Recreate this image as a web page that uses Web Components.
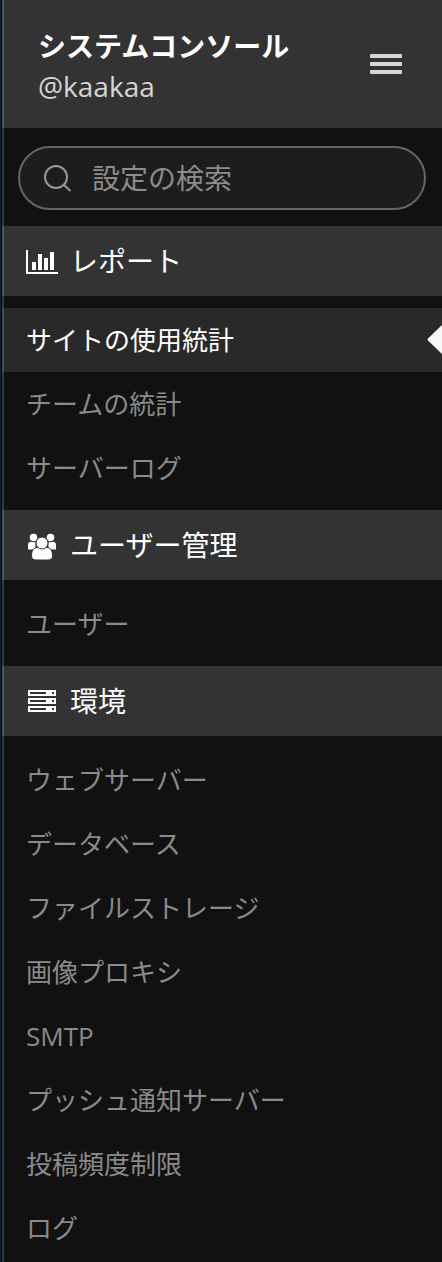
<!DOCTYPE html>
<html lang="ja">
<head>
<meta charset="utf-8">
<meta name="viewport" content="width=device-width, initial-scale=1">
<title>システムコンソール</title>
<style>
html, body { margin: 0; background: #111; }
body { font-family: "Open Sans", "Noto Sans CJK JP", sans-serif; color: #fff; }
</style>
</head>
<body>
<console-sidebar>
  <console-header slot="header" user="@kaakaa">システムコンソール</console-header>
  <console-search slot="search" label="設定の検索"></console-search>
  <nav-section icon="chart" heading="レポート">
    <nav-item active>サイトの使用統計</nav-item>
    <nav-item>チームの統計</nav-item>
    <nav-item>サーバーログ</nav-item>
  </nav-section>
  <nav-section icon="users" heading="ユーザー管理">
    <nav-item>ユーザー</nav-item>
  </nav-section>
  <nav-section icon="server" heading="環境">
    <nav-item>ウェブサーバー</nav-item>
    <nav-item>データベース</nav-item>
    <nav-item>ファイルストレージ</nav-item>
    <nav-item>画像プロキシ</nav-item>
    <nav-item>SMTP</nav-item>
    <nav-item>プッシュ通知サーバー</nav-item>
    <nav-item>投稿頻度制限</nav-item>
    <nav-item>ログ</nav-item>
  </nav-section>
</console-sidebar>

<script>
class BaseElement extends HTMLElement {
  connectedCallback() {
    if (this.shadowRoot) return;
    this.attachShadow({ mode: "open" }).innerHTML = this.render();
  }
}

customElements.define("console-sidebar", class extends BaseElement {
  render() {
    return `<style>
      :host { display: block; box-sizing: border-box; min-height: 100vh; padding-left: 2px;
        background: linear-gradient(to right, #0b1c38 1px, #05080e 1px); }
      .panel { position: relative; min-height: 100vh; background: #111; overflow: hidden; }
      .panel::after { content: ""; position: absolute; top: 0; bottom: 0; left: 0; width: 2px;
        background: rgba(255,255,255,.16); pointer-events: none; }
    </style>
    <div class="panel"><slot name="header"></slot><slot name="search"></slot><nav><slot></slot></nav></div>`;
  }
});

customElements.define("console-header", class extends BaseElement {
  render() {
    return `<style>
      :host { display: block; background: #333; }
      header { display: flex; align-items: center; justify-content: space-between; padding: 24px 36px; }
      h1 { margin: 0; font-size: 28px; line-height: 44px; font-weight: 700; color: #fff; white-space: nowrap; }
      p { margin: 0; font-size: 28px; line-height: 36px; color: #d6d6d6; }
      button { display: flex; padding: 4px; border: 0; background: none; color: #d6d6d6; cursor: pointer; }
      svg { display: block; }
    </style>
    <header>
      <div><h1><slot></slot></h1><p>${this.getAttribute("user")}</p></div>
      <button type="button" aria-label="メニュー">
        <svg width="32" height="20" viewBox="0 0 32 20" fill="currentColor" aria-hidden="true">
          <rect width="32" height="4" rx="1"/><rect y="8" width="32" height="4" rx="1"/><rect y="16" width="32" height="4" rx="1"/>
        </svg>
      </button>
    </header>`;
  }
});

customElements.define("console-search", class extends BaseElement {
  render() {
    const label = this.getAttribute("label");
    return `<style>
      :host { display: block; padding: 18px 16px 16px; }
      label { display: flex; align-items: center; gap: 20px; box-sizing: border-box; height: 64px;
        padding: 0 24px; border: 2px solid #666; border-radius: 32px; background: #1d1d1d; color: #999; }
      svg { flex: none; display: block; }
      input { flex: 1; min-width: 0; padding: 0; border: 0; outline: 0; background: none;
        font: inherit; font-size: 28px; line-height: 40px; color: #fff; }
      input::placeholder { color: #8c8c8c; opacity: 1; }
    </style>
    <label>
      <svg width="28" height="28" viewBox="0 0 28 28" fill="none" stroke="currentColor" stroke-width="2" aria-hidden="true">
        <circle cx="12" cy="13" r="11"/><path d="M19.5 20.5 26.5 27"/>
      </svg>
      <input type="search" placeholder="${label}" aria-label="${label}">
    </label>`;
  }
});

const icons = {
  chart: `<path d="M0 1h2v22h30v2H0z"/><path d="M6 13h4v8H6zM12 5h4v16h-4zM18 9h4v12h-4zM24 3h4v18h-4z"/>`,
  users: `<g stroke="#333" stroke-width="1" transform="translate(0 1.5)">
    <path d="M1.5 15.5V10q0-3 3-3H10v8.500zM22 7h5.500q3 0 3 3v5.500H22z"/>
    <circle cx="7.500" cy="3" r="4.300"/><circle cx="24.500" cy="3" r="4.300"/>
    <path d="M5.500 21q0-8 6-8h9q6 0 6 8 0 4.500-4.500 4.500H10q-4.500 0-4.500-4.500z"/>
    <circle cx="16" cy="8.500" r="6"/></g>`,
  server: `<path fill-rule="evenodd" d="M2 1h28v6H2zM4 3v2h16V3zM26 3v2h2V3zM2 9h28v6H2zM4 11v2h16v-2zM26 11v2h2v-2zM2 17h28v6H2zM4 19v2h16v-2zM26 19v2h2v-2z"/>`
};

customElements.define("nav-section", class extends BaseElement {
  render() {
    return `<style>
      :host { display: block; padding-bottom: 10px; }
      :host(:last-of-type) { padding-bottom: 0; }
      h2 { display: flex; align-items: center; gap: 12px; box-sizing: border-box; height: 70px; margin: 0 0 12px;
        padding: 0 24px; background: #333; font-size: 28px; line-height: 40px; font-weight: 400; color: #fff; }
      svg { flex: none; display: block; overflow: visible; }
    </style>
    <h2><svg width="32" height="24" viewBox="0 0 32 24" fill="currentColor" aria-hidden="true">${icons[this.getAttribute("icon")]}</svg>${this.getAttribute("heading")}</h2>
    <div role="list"><slot></slot></div>`;
  }
});

customElements.define("nav-item", class extends BaseElement {
  render() {
    this.setAttribute("role", "listitem");
    return `<style>
      :host { display: block; }
      a { display: block; position: relative; overflow: hidden; padding: 0 24px; font-size: 26px; line-height: 64px;
        color: #8a8a8a; text-decoration: none; }
      :host([active]) a { background: #292929; color: #fff; }
      svg { position: absolute; top: 16px; right: 0; }
    </style>
    <a href="#"${this.hasAttribute("active") ? ' aria-current="page"' : ""}><slot></slot>${this.hasAttribute("active")
      ? '<svg width="15" height="32" viewBox="0 0 15 32" fill="#f7f7f7" aria-hidden="true"><path d="M15 1 1 14.500q-1 1 0 2L15 30z"/></svg>' : ""}</a>`;
  }
});
</script>
</body>
</html>
